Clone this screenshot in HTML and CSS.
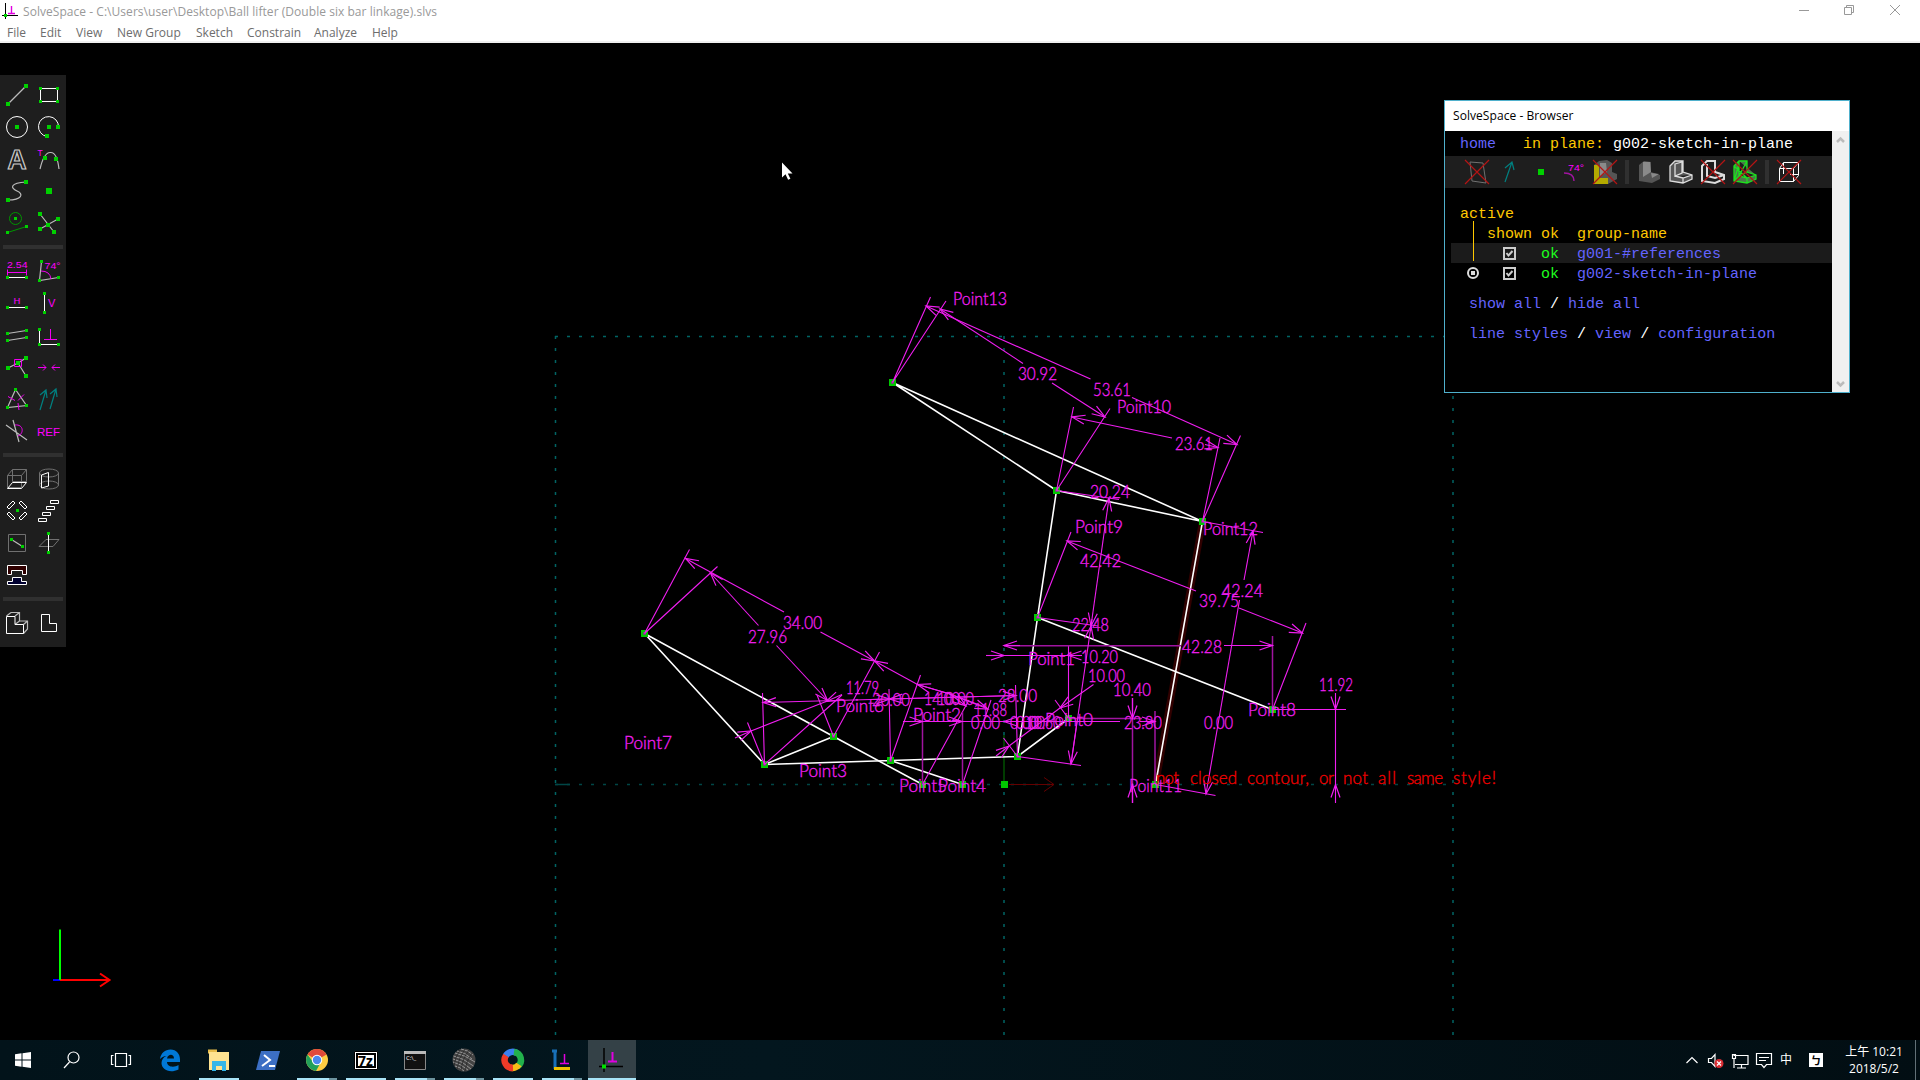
FILE: index.html
```html
<!DOCTYPE html>
<html lang="en">
<head>
<meta charset="utf-8">
<title>SolveSpace</title>
<link rel="stylesheet" href="styles.css">
</head>
<body>
<div class="desktop">
<header class="titlebar">
  <div class="caption">
    <svg class="app-icon" width="16" height="16" viewBox="0 0 16 16"><path d="M3.500 0v16M0 12.500h16" stroke="#000"/><path d="M6 10.500h7M9.500 3v7" stroke="#e000e0" stroke-width="1.400"/><path d="M2 11h3v3H2z" fill="#00d000"/></svg>
    <span class="caption-text">SolveSpace - C:\Users\user\Desktop\Ball lifter (Double six bar linkage).slvs</span>
    <svg class="win-controls" width="121" height="20" viewBox="0 0 121 20"><path d="M0 10.500h10M45.500 7.500h7v7h-7zM47.500 7.500v-2h7v7h-2M91 5l10 10M101 5l-10 10"/></svg>
  </div>
  <nav class="menu"><span class="m1">File</span><span class="m2">Edit</span><span class="m3">View</span><span class="m4">New Group</span><span class="m5">Sketch</span><span class="m6">Constrain</span><span class="m7">Analyze</span><span class="m8">Help</span></nav>
</header>

<main class="canvas">
<svg class="drawing" viewBox="0 43 1920 997" width="1920" height="997">
  <defs>
    <marker id="a" markerUnits="userSpaceOnUse" markerWidth="16" markerHeight="12" refX="14" refY="6" orient="auto-start-reverse"><path d="M1 1.500L14 6L1 10.500" fill="none" stroke="#f01ef0" stroke-width="1.200"/></marker>
    <marker id="r" markerUnits="userSpaceOnUse" markerWidth="14" markerHeight="16" refX="11" refY="8" orient="auto"><path d="M1 1L11 8L1 15" fill="none" stroke="#640000"/></marker>
  </defs>
  <g class="guides">
    <path d="M555.500 336V1040M1453 336V1040M1004 336V1040"/><path d="M555 336.500H1453"/><path class="faint" d="M555 784.500H1453"/><path class="solid" d="M555 784.500h15"/>
  </g>
  <path class="halo" d="M1202.500 521.500L1155.500 784.500"/>
  <path d="M1004 784V735" stroke="#003c00" stroke-width="2"/>
  <path d="M1009 784.500H1054" stroke="#640000" marker-end="url(#r)"/>
  <g class="lines">
    <path d="M833.500 736.500L764.500 764.500L644.500 633.500L833.500 736.500L922.500 784.500"/>
    <path d="M764.500 764.500L890.500 760.500L962.500 784.500M890.500 760.500L1017.500 756.500L1068.500 718.500"/>
    <path d="M1017.500 756.500L1037.500 617.500L1056.500 490.500M1037.500 617.500L1272.500 709.500"/>
    <path d="M1056.500 490.500L892.500 382.500L1202.500 521.500L1155.500 784.500M1056.500 490.500L1202.500 521.500"/>
  </g>
  <path class="points" d="M644.500 633.500h0M764.500 764.500h0M833.500 736.500h0M890.500 760.500h0M922.500 784.500h0M962.500 784.500h0M1004.500 784.500h0M1017.500 756.500h0M1037.500 617.500h0M1068.500 718.500h0M1155.500 784.500h0M1272.500 709.500h0M892.500 382.500h0M1056.500 490.500h0M1202.500 521.500h0"/>
  <path class="cores" d="M644.500 633.500h0M764.500 764.500h0M833.500 736.500h0M890.500 760.500h0M1017.500 756.500h0M1037.500 617.500h0M892.500 382.500h0M1056.500 490.500h0M1202.500 521.500h0"/>
  <g class="dims">
    <path d="M644.500 633.500L689.500 549.500M833.500 736.500L879.500 652M644.500 633.500L717.500 566.500M764.500 764.500L842 695M764.500 764.500L747.500 722.500M833.500 736.500L817 695M764.500 764.500L762.500 693M890.500 760.500L889 689M1017.500 756.500L1015.500 685M922.500 784.500L969 700M890.500 760.500L920.500 675M962.500 784.500L991 700"/>
    <path d="M892.500 382.500L930.500 297M892.500 382.500L946 301M1056.500 490.500L1110 408.500M1056.500 490.500L1073.500 407M1202.500 521.500L1240.500 435.500M1202.500 521.500L1220 438M1202.500 521.500L1263 532.500M1155.500 784.500L1215.500 795.500M1056.500 490.500L1119 499.500M1037.500 617.500L1098 626M1017.500 756.500L1081 765.500M1037.500 617.500L1071 532M1272.500 709.500L1306 623"/>
    <path d="M1068.500 645V718M1068.500 718.500L1055 700M1017.500 756.500L1003.500 738M1272.500 709.500H1346M1335.500 709V785"/>
    <path class="dim" d="M1272.500 636V709M1155 711V784M1068 718.500H1142M1132.500 698V803M1004 645.700H1181M922.500 712V784M962.500 712V784"/>
    <g marker-start="url(#a)">
      <path d="M685.500 558.500L784 612"/><path d="M710.500 573L758.500 625.500"/><path d="M874.500 661L917.500 684.500L950 694"/><path d="M917.500 684.500L950 694L985 707"/><path d="M763 702.500L889.500 699"/>
      <path d="M926 306L1090.500 379"/><path d="M940 309L1023 363.500"/><path d="M1072 417L1172 438"/><path d="M1253 531L1244 580"/><path d="M1109 498L1091 626"/><path d="M1091 626L1071 764"/><path d="M1067 541L1196 591"/><path d="M1004 645.500H1020"/><path d="M1068.500 655.500H1082"/><path d="M1060 708L1093.500 684.500"/><path d="M1004 721.500H1120"/><path d="M1132.500 784.500V803"/><path d="M1335.500 784.500V803"/><path d="M826 701.500L842 694.500"/><path d="M889.500 699L1016 695.500"/>
    </g>
    <g marker-end="url(#a)">
      <path d="M820.500 632L874.500 661"/><path d="M776.500 645.500L827.500 700.500"/><path d="M735 738L751 731"/><path d="M751 731L826 701.500" marker-end="none"/><path d="M870 699.500L889.500 699"/><path d="M889.500 699L1016 695.500"/>
      <path d="M950 694L966 706"/><path d="M955 696L988 709"/><path d="M1132 397.500L1237 444.500"/><path d="M1052 383L1105 417"/><path d="M1205 444.500L1218 447.500"/><path d="M1239.500 600L1206 794"/><path d="M1092 619L1091 626"/><path d="M1077 722L1071 764"/><path d="M1239 608L1302.500 633"/><path d="M1224 645.500H1272.500"/><path d="M986 655.500H1004"/><path d="M1004 655.500H1068" marker-end="none"/><path d="M996 756L1009 746"/><path d="M1009 746L1060 708" marker-end="none"/><path d="M903 721.500H922.500"/><path d="M922 721.500H962"/><path d="M962 721.500H1004" marker-end="none"/><path d="M1140 721.500H1155"/><path d="M1132.500 698V718.500"/><path d="M1335.500 693V709.500"/>
    </g>
  </g>
  <g class="labels">
    <text x="953" y="304.500" textLength="54" lengthAdjust="spacingAndGlyphs">Point13</text>
    <text x="1117" y="412.500" textLength="54" lengthAdjust="spacingAndGlyphs">Point10</text>
    <text x="1075" y="532.500" textLength="48" lengthAdjust="spacingAndGlyphs">Point9</text>
    <text x="1203" y="534.500" textLength="55" lengthAdjust="spacingAndGlyphs">Point12</text>
    <text x="1028" y="664.500" textLength="47" lengthAdjust="spacingAndGlyphs">Point1</text>
    <text x="1248" y="715.500" textLength="48" lengthAdjust="spacingAndGlyphs">Point8</text>
    <text x="1045" y="725.500" textLength="48" lengthAdjust="spacingAndGlyphs">Point0</text>
    <text x="1129" y="791.500" textLength="53" lengthAdjust="spacingAndGlyphs">Point11</text>
    <text x="899" y="791.500" textLength="48" lengthAdjust="spacingAndGlyphs">Point5</text>
    <text x="938" y="791.500" textLength="48" lengthAdjust="spacingAndGlyphs">Point4</text>
    <text x="913" y="720.500" textLength="48" lengthAdjust="spacingAndGlyphs">Point2</text>
    <text x="836" y="711.500" textLength="48" lengthAdjust="spacingAndGlyphs">Point6</text>
    <text x="799" y="776.500" textLength="48" lengthAdjust="spacingAndGlyphs">Point3</text>
    <text x="624" y="748.500" textLength="48" lengthAdjust="spacingAndGlyphs">Point7</text>
    <text x="1018" y="379.500" textLength="39" lengthAdjust="spacingAndGlyphs">30.92</text>
    <text x="1093" y="395.500" textLength="38" lengthAdjust="spacingAndGlyphs">53.61</text>
    <text x="1175" y="449.500" textLength="38" lengthAdjust="spacingAndGlyphs">23.61</text>
    <text x="1090" y="497.500" textLength="40" lengthAdjust="spacingAndGlyphs">20.24</text>
    <text x="1080" y="566.500" textLength="41" lengthAdjust="spacingAndGlyphs">42.42</text>
    <text x="1222" y="596.500" textLength="41" lengthAdjust="spacingAndGlyphs">42.24</text>
    <text x="1199" y="606.500" textLength="40" lengthAdjust="spacingAndGlyphs">39.75</text>
    <text x="1072" y="630.500" textLength="37" lengthAdjust="spacingAndGlyphs">22.48</text>
    <text x="1182" y="652.500" textLength="40" lengthAdjust="spacingAndGlyphs">42.28</text>
    <text x="1081" y="662.500" textLength="37" lengthAdjust="spacingAndGlyphs">10.20</text>
    <text x="1088" y="681.500" textLength="37" lengthAdjust="spacingAndGlyphs">10.00</text>
    <text x="1113" y="695.500" textLength="38" lengthAdjust="spacingAndGlyphs">10.40</text>
    <text x="1319" y="690.500" textLength="34" lengthAdjust="spacingAndGlyphs">11.92</text>
    <text x="1124" y="728.500" textLength="38" lengthAdjust="spacingAndGlyphs">23.80</text>
    <text x="1204" y="728.500" textLength="29" lengthAdjust="spacingAndGlyphs">0.00</text>
    <text x="971" y="728.500" textLength="29" lengthAdjust="spacingAndGlyphs">0.00</text>
    <text x="1010" y="728.500" textLength="29" lengthAdjust="spacingAndGlyphs">0.00</text>
    <text x="1016" y="728.500" textLength="29" lengthAdjust="spacingAndGlyphs">0.00</text>
    <text x="1026" y="728.500" textLength="35" lengthAdjust="spacingAndGlyphs">10.60</text>
    <text x="998" y="701.500" textLength="39" lengthAdjust="spacingAndGlyphs">28.00</text>
    <text x="974" y="715.500" textLength="33" lengthAdjust="spacingAndGlyphs">11.88</text>
    <text x="924" y="704.500" textLength="36" lengthAdjust="spacingAndGlyphs">14.00</text>
    <text x="937" y="704.500" textLength="37" lengthAdjust="spacingAndGlyphs">10.00</text>
    <text x="872" y="705.500" textLength="38" lengthAdjust="spacingAndGlyphs">20.00</text>
    <text x="846" y="693.500" textLength="33" lengthAdjust="spacingAndGlyphs">11.79</text>
    <text x="783" y="628.500" textLength="39" lengthAdjust="spacingAndGlyphs">34.00</text>
    <text x="748" y="643" textLength="39" lengthAdjust="spacingAndGlyphs">27.96</text>
    <g class="error"><text x="1156" y="783.500" textLength="23">not</text><text x="1190" y="783.500" textLength="47">closed</text><text x="1247" y="783.500" textLength="62">contour,</text><text x="1319" y="783.500" textLength="15">or</text><text x="1343" y="783.500" textLength="25">not</text><text x="1378" y="783.500" textLength="18">all</text><text x="1407" y="783.500" textLength="36">same</text><text x="1453" y="783.500" textLength="43">style!</text></g>
  </g>
  <g fill="none" stroke-width="2"><path d="M53 980H60" stroke="#00f"/><path d="M60 980H109M100 973.500L109.500 980L100 986.500" stroke="#f00"/><path d="M60 929.500V980" stroke="#0f0"/></g>
  <path d="M782 162.500v15l3.500-3.200 2.600 5.400 2.300-1-2.600-5.300h4.700z" fill="#fff"/>
</svg>

<aside class="toolbar">
  <div class="tools">
    <svg viewBox="0 0 32 32"><path class="g" d="M7 25L25 7"/><path class="d" d="M7 25h0M25 7h0"/></svg>
    <svg viewBox="0 0 32 32"><path class="w" d="M7.500 9.500h17v13h-17z"/><path class="d s" d="M7.500 9.500h0M24.500 9.500h0M7.500 22.500h0M24.500 22.500h0"/></svg>
    <svg viewBox="0 0 32 32"><circle class="w" cx="16" cy="16" r="10.500"/><path class="d" d="M16 16h0"/></svg>
    <svg viewBox="0 0 32 32"><path class="w" d="M25.500 16A10 10 0 1 0 14 25.500"/><path class="d" d="M16 16h0M25 16h0M14 25h0"/></svg>
    <svg viewBox="0 0 32 32"><text class="big" x="6.500" y="26" textLength="19" lengthAdjust="spacingAndGlyphs">A</text></svg>
    <svg viewBox="0 0 32 32"><path class="g" d="M7 26Q11 9 17.500 9.500Q24 9 26 26"/><path class="d" d="M12 15h0M23 16h0"/><text class="t" x="4.500" y="13" font-size="8.500">T</text></svg>
    <svg viewBox="0 0 32 32"><path class="g" d="M25 7C9 8 9 13 16 16S21 25 7 25"/><path class="d" d="M7 25h0M25 7h0"/></svg>
    <svg viewBox="0 0 32 32"><path fill="#00d000" d="M13 13h6v6h-6z"/></svg>
    <svg viewBox="0 0 32 32"><path class="gr" d="M6.500 25.500l19-6M8.500 11.500a6 6 0 1 0 12 0a6 6 0 1 0-12 0"/><path class="d s" d="M6.500 25.500h0M25.500 19.500h0M14.500 11.500h0"/></svg>
    <svg viewBox="0 0 32 32"><path class="g" d="M7 7l14 18M7 22l18-10"/><path class="d" d="M7 7h0M25 12h0M15 18h0M7 22h0M21 25h0"/></svg>
  </div>
  <hr>
  <div class="tools">
    <svg viewBox="0 0 32 32"><text class="t" x="6" y="12.500" font-size="9.500" textLength="20.500" lengthAdjust="spacingAndGlyphs">2.54</text><path class="m" d="M6.500 14.500v6M25.500 14.500v6M6.500 17.500h19"/><path class="w" d="M6 22.500h20"/><path class="d s" d="M6.500 22.500h0M25.500 22.500h0"/></svg>
    <svg viewBox="0 0 32 32"><path class="g" d="M8.500 6.500l-2 19 19-3"/><path class="m" d="M8 16q9 0 10 8"/><text class="t" x="11.500" y="14" font-size="9.500" textLength="16" lengthAdjust="spacingAndGlyphs">74°</text><path class="d s" d="M8.500 6.500h0M6.500 25.500h0M25.500 22.500h0"/></svg>
    <svg viewBox="0 0 32 32"><text class="t" x="12.500" y="17" font-size="9.500">H</text><path class="w" d="M6 20.500h20"/><path class="d s" d="M6.500 20.500h0M25.500 20.500h0"/></svg>
    <svg viewBox="0 0 32 32"><text class="t" x="15" y="20" font-size="11">V</text><path class="w" d="M11.500 6v20"/><path class="d s" d="M11.500 6.500h0M11.500 25.500h0"/></svg>
    <svg viewBox="0 0 32 32"><path class="g" d="M6.500 14.500l19-3M6.500 21.500l19-3"/><path class="d s" d="M6.500 14.500h0M25.500 11.500h0M6.500 21.500h0M25.500 18.500h0"/></svg>
    <svg viewBox="0 0 32 32"><path class="w" d="M6.500 10.500v15h19"/><path class="m" d="M11 20.500h13M17.500 10v10"/><path class="d s" d="M6.500 10.500h0M6.500 25.500h0M25.500 25.500h0"/></svg>
    <svg viewBox="0 0 32 32"><path class="g" d="M7 17L17 12L25 7M17 12L25 25"/><path class="m" d="M13.500 8.500h7v7h-7z"/><path class="d" d="M7 17h0M17 12h0M25 7h0M25 25h0"/></svg>
    <svg viewBox="0 0 32 32"><path class="m" d="M5 16.500h8M10 13.500l3 3-3 3M27 16.500h-8M22 13.500l-3 3 3 3"/></svg>
    <svg viewBox="0 0 32 32"><path class="g" d="M14.500 6.500l-8 18 19-2z"/><path class="m" d="M7 13.500l7 4M23 11.500l-6 6M17 20l1 7"/><path class="d s" d="M14.500 6.500h0M6.500 24.500h0M25.500 22.500h0"/></svg>
    <svg viewBox="0 0 32 32"><path class="te" d="M7 27l6-20M7 12l6-5 1 8M17 26l6-20M17 11l6-5 1 8"/></svg>
    <svg viewBox="0 0 32 32"><path class="g" d="M5 10l21 15M12 5l6 22"/><path class="m" d="M14 10c9-1 9 9 3 11"/></svg>
    <svg viewBox="0 0 32 32"><text class="t" x="4" y="21" font-size="11.500" textLength="23" lengthAdjust="spacingAndGlyphs">REF</text></svg>
  </div>
  <hr>
  <div class="tools">
    <svg viewBox="0 0 32 32"><path class="dk" d="M6.500 12.500h14v12h-14zM11.500 6.500h14v12h-14zM6.500 12.500l5-6M20.500 12.500l5-6"/><path class="w" d="M6.500 25.500h14l5-6h-14z"/></svg>
    <svg viewBox="0 0 32 32"><path class="dk" d="M6.500 10v12.500M25.500 10v12.500M6.500 10a9.500 4 0 1 1 19 0a9.500 4 0 1 1-19 0M6.500 22a9.500 4 0 1 1 19 0a9.500 4 0 1 1-19 0"/><path class="w" d="M8.500 12l7-2.500v13.500l-7 2z"/></svg>
    <svg viewBox="0 0 32 32"><path class="w" d="M6 12l6-6 2 2-6 6zM26 12l-6-6-2 2 6 6zM6 19l6 6 2-2-6-6zM26 19l-6 6-2-2 6-6z"/><path class="d s" d="M16.500 15.500h0"/></svg>
    <svg viewBox="0 0 32 32"><path class="w" d="M17.500 5.500h8v3h-8zM13.500 11.500h8v3h-8zM9.500 17.500h8v3h-8zM5.500 23.500h8v3h-8z"/></svg>
    <svg viewBox="0 0 32 32"><path class="dk" d="M7.500 7.500h17v17h-17z"/><path class="g" d="M10.500 12.500l11 7"/><path class="d s" d="M10.500 12.500h0M21.500 19.500h0"/></svg>
    <svg viewBox="0 0 32 32"><path class="dk" d="M6 19.500l7-7h13l-6 7z"/><path class="w" d="M15.500 7v18"/><path class="d s" d="M15.500 6.500h0M15.500 25.500h0"/></svg>
    <svg viewBox="0 0 32 32"><path class="w" fill="#300000" d="M6.500 6.500h19v9h-4v-4h-11v4h-4z"/><path class="w" fill="#000030" d="M6.500 25.500v-3h5v-4h9v4h5v3z"/></svg>
  </div>
  <hr>
  <div class="tools">
    <svg viewBox="0 0 32 32"><path class="g" d="M10 5.500h8.500v8.500h8v8l-4 4.500M5.500 9l4.500-3.500M14 9l4.500-3.500M14 17.500l4.500-3.500M22.500 17.500l4-3.500"/><path class="w" d="M5.500 9.500h8.500v8h8.500v9h-17z"/></svg>
    <svg viewBox="0 0 32 32"><path class="w" d="M8.500 7.500h8v9h7v8h-15z"/></svg>
  </div>
</aside>

<section class="browser">
  <div class="browser-title">SolveSpace - Browser</div>
  <div class="browser-body">
    <div class="pane">
      <div class="row head"><a>home</a>   <i>in plane:</i> <b>g002-sketch-in-plane</b></div>
      <div class="iconbar">
        <svg viewBox="0 0 32 32"><path class="dk" d="M9 6l13 1 3 20-14-2z"/><path class="x" d="M4 4l24 24M28 4L4 28"/></svg>
        <svg viewBox="0 0 32 32"><path class="te" d="M12 26l7-20M12 12l7-6 2 8"/></svg>
        <svg viewBox="0 0 32 32"><path fill="#00d000" d="M13 13h6v6h-6z"/></svg>
        <svg viewBox="0 0 32 32"><path class="m dim" d="M7 17q10 0 10 8"/><text class="t" x="11" y="15" font-size="9.500" textLength="16" lengthAdjust="spacingAndGlyphs">74°</text></svg>
        <svg viewBox="0 0 32 32"><path fill="#555" d="M5 9l5-4 8-1 5 3v9l5 2v5l-9 5H5z"/><path fill="#8a8a8a" d="M11 7h6l1 9-7 4z"/><path fill="#b4aa00" d="M5 9h5v13h9v6H5z"/><path class="x" d="M4 4l24 24M28 4L4 28"/></svg>
        <span class="sep"></span>
        <svg viewBox="0 0 32 32"><path fill="#555" d="M6 9l5-4 7 1v10l9 3v4l-8 4-13-2z"/><path fill="#8a8a8a" d="M10 6h7l1 10-8 5zM18 17l8 1-7 4z"/></svg>
        <svg viewBox="0 0 32 32"><path class="l" fill="#555" d="M5 10l5-5h8v11l9 3v4l-9 4-13-2zM10 8l7-2v11l-7 3zM10 20l8 2 9-3M18 22v5"/></svg>
        <svg viewBox="0 0 32 32"><path class="l thick" d="M5 10l5-5h8v11l9 3v4l-9 4-13-2zM10 8v12l8 2 9-3"/><path class="x" d="M4 4l24 24M28 4L4 28"/></svg>
        <svg viewBox="0 0 32 32"><path fill="#4a7a4a" stroke="#1ee01e" stroke-width="1.300" d="M5 10l5-5h8v11l9 3v4l-9 4-13-2zM10 5v15l8 2 9-3M10 20L18 5M5 25l5-17M10 20l8-4M18 27v-5M5 10l13 12M10 20l-5 5"/><path class="x" d="M4 4l24 24M28 4L4 28"/></svg>
        <span class="sep"></span>
        <svg viewBox="0 0 32 32"><path class="w" d="M6.500 12.500h14v13h-14zM6.500 12.500l4-6h15v13l-5 6M20.500 12.500l5-6M10.500 7v11M17 18.500h8"/><path class="x" d="M4 4l24 24M28 4L4 28"/></svg>
      </div>
      <div class="list">
        <div class="row"><i>active</i></div>
        <div class="row"><i>   shown ok  group-name</i></div>
        <div class="row shade">         <em>ok</em>  <a>g001-#references</a><svg class="check" viewBox="0 0 13 13"><path d="M1 1h11v11H1z"/><path d="M3.500 6l2 2.500L9.500 4"/></svg></div>
        <div class="row">         <em>ok</em>  <a>g002-sketch-in-plane</a><svg class="check" viewBox="0 0 13 13"><path d="M1 1h11v11H1z"/><path d="M3.500 6l2 2.500L9.500 4"/></svg><svg class="radio" viewBox="0 0 12 12"><circle cx="6" cy="6" r="5"/><path d="M5 5h2v2H5z"/></svg></div>
        <span class="stem"></span>
      </div>
      <div class="row links"> <a>show all</a> <b>/</b> <a>hide all</a></div>
      <div class="row links"> <a>line styles</a> <b>/</b> <a>view</a> <b>/</b> <a>configuration</a></div>
    </div>
    <div class="scroll"><svg viewBox="0 0 17 17"><path d="M5 11l3.500-3.500L12 11"/></svg><svg viewBox="0 0 17 17"><path d="M5 7l3.500 3.500L12 7"/></svg></div>
  </div>
</section>
</main>

<footer class="taskbar">
  <div class="apps">
    <span><svg viewBox="0 0 32 32"><path fill="#fff" d="M8 10.300l6.500-1V15.500H8zM15.500 9.200L24 8v7.500h-8.500zM8 16.500h6.500v6.300L8 21.800zM15.500 16.500H24V24l-8.500-1.200z"/></svg></span>
    <span><svg viewBox="0 0 32 32"><path class="tl" d="M13.500 18L8 24"/><circle class="tl" cx="17.500" cy="13.500" r="5.500"/></svg></span>
    <span><svg viewBox="0 0 32 32"><path class="tl" d="M10.500 9.500h11v13h-11zM8.500 11.500h-2v9h2M23.500 11.500h2v9h-2"/></svg></span>
    <span><svg viewBox="0 0 32 32"><path fill="#0078d7" d="M6 15C7 9 11 5.500 16.500 5.500 22.500 5.500 26 10 26 15.500V18H13c0 5 7 6 11.500 3v4.500C15 30 7.500 25 7.500 19c0-3 2-6 5-7-3 0-5 1.500-6.500 3zM13 14.500h7c0-5-6-5-7 0z"/></svg></span>
    <span class="run"><svg viewBox="0 0 32 32"><path fill="#e8bc4a" d="M5 5.500h9v4H5z"/><path fill="#ffe391" d="M6 8h20v18H6z"/><path fill="#35b6e8" d="M9 17h14v10h-4v-5h-6v5H9z"/></svg></span>
    <span><svg viewBox="0 0 32 32"><path fill="#3c6fc4" d="M9 7h19l-5 19H4z"/><path d="M12 11l6 5-8 6M17 22h6" stroke="#fff" stroke-width="2"/></svg></span>
    <span class="run multi"><svg viewBox="0 0 32 32"><circle cx="16" cy="16" r="11" fill="#ffcd42"/><path fill="#e04a3a" d="M16 16L6.500 10.500a11 11 0 0 1 19 0z"/><path fill="#22a05a" d="M6.500 10.500a11 11 0 0 0 8.500 16.400L20 18l-8 0z"/><circle cx="16" cy="16" r="5.200" fill="#fff"/><circle cx="16" cy="16" r="4.200" fill="#4a88ee"/></svg></span>
    <span class="run"><svg viewBox="0 0 32 32"><path fill="#fff" stroke="#000" d="M4.500 7.500h23v18h-23z"/><path d="M7 10h18v13H7z" fill="#fff" stroke="#000" stroke-width="2"/><text class="zip" x="8" y="22" font-size="14">7z</text></svg></span>
    <span class="run multi"><svg viewBox="0 0 32 32"><path fill="#111" stroke="#888" d="M5.500 7.500h21v18h-21z"/><path fill="#bbb" d="M5 7h22v3H5z"/><text x="7" y="16" font-size="6" fill="#fff">C:\_</text></svg></span>
    <span class="run multi"><svg viewBox="0 0 32 32"><circle cx="16" cy="16" r="11.500" fill="#444"/><g stroke="#aaa" stroke-width=".8"><path d="M9 7q8 1 15 8M7 9q10 2 20 9M5.500 12q10 2 20 10M5 15q10 2 18 10M5 18q8 2 15 8M7 22q5 1 9 5M13 5q7 1 12 6"/></g><g stroke="#222" stroke-width=".7"><path d="M9 25q1-10 8-20M13 27q1-12 8-21M17 27q1-10 7-18M6 22q1-9 6-16"/></g></svg></span>
    <span class="run"><svg viewBox="0 0 32 32"><g stroke-width="6.500"><path stroke="#3a80f0" d="M8.700 12A8 8 0 0 1 20 9"/><path stroke="#22b14c" d="M17 8A8 8 0 0 1 20.500 22.500"/><path stroke="#f8bd18" d="M22 20.500A8 8 0 0 1 13 23.500"/><path stroke="#ef3b28" d="M16 24A8 8 0 0 1 9 11.500"/></g></svg></span>
    <span class="run multi"><svg viewBox="0 0 32 32"><path d="M9 6v19M6 7h5" stroke="#1870b8" stroke-width="3"/><path d="M8 24.500h16" stroke="#f0c000" stroke-width="3"/><path d="M14 19.500h9M18.500 10v9" stroke="#e000e0" stroke-width="1.500"/></svg></span>
    <span class="run active"><svg viewBox="0 0 32 32"><path d="M9 4v24M4 22.500h24" stroke="#000" stroke-width="1.500"/><path d="M13 17.500h9M17.500 8v9" stroke="#e000e0" stroke-width="2"/><path fill="#00e000" d="M7 20.500h4v4H7z"/></svg></span>
  </div>
  <div class="tray">
    <svg width="112" height="20" viewBox="0 0 112 20"><g class="tl"><path d="M.5 13L6 7.500l5.500 5.500M22.500 8.500h3l3.500-4v12l-3.500-4h-3zM47.500 5.500H62v9H49M55.500 15v3M51 18h9M46.500 4.500h3v4h-3zM48 8.500V18M70.500 3.500h15v11h-5l-2.500 3-2.500-3h-5zM73 7.500h10M73 10.500h7"/></g><circle cx="33" cy="13.500" r="4.500" fill="#d82c32"/><path class="tl" d="M31 11.500l4 4M35 11.500l-4 4"/></svg>
    <span class="ime">中</span><span class="bopo">ㄅ</span>
    <div class="clock"><span>上午 10:21</span><span>2018/5/2</span></div>
  </div>
</footer>
</div>
</body>
</html>
```
FILE: styles.css
```css
* { box-sizing: border-box; }
body { margin: 0; background: #000; font-family: "Open Sans", "Noto Sans", "Noto Sans CJK TC", sans-serif; font-size: 12px; overflow: hidden; }
.desktop { width: 1920px; height: 1080px; display: flex; flex-direction: column; }
svg { display: block; fill: none; flex: none; }

.titlebar { height: 43px; background: #fff; border-bottom: 2px solid #f0f0f0; }
.caption { display: flex; height: 23px; padding-left: 2px; color: #999; }
.app-icon { margin-top: 3px; }
.caption-text { margin-left: 5px; line-height: 24px; letter-spacing: .045px; white-space: nowrap; }
.win-controls { margin-left: auto; stroke: #999; }
.menu { display: flex; padding-left: 7px; line-height: 19px; color: #6d6d6d; white-space: nowrap; }
.m1 { width: 33px; }
.m2 { width: 36px; }
.m3 { width: 41px; }
.m4 { width: 79px; }
.m5 { width: 51px; }
.m6 { width: 67px; }
.m7 { width: 58px; }

.canvas { position: relative; height: 997px; background: #000; overflow: hidden; }
.guides { stroke: #006464; stroke-width: 1.5; stroke-dasharray: 3 9; }
.faint { stroke: #004646; }
.solid { stroke-dasharray: none; stroke: #004646; }
.halo { stroke: #300000; stroke-width: 7; }
.lines { stroke: #fff; stroke-width: 1.6; }
.points { stroke: #00c800; stroke-width: 7; stroke-linecap: square; }
.cores { stroke: #a01ea0; stroke-width: 2.5; stroke-linecap: square; }
.dims { stroke: #f01ef0; stroke-width: 1.1; }
.dim { stroke: #a014a0; stroke-width: 1.5; }
.labels { fill: #f01ef0; stroke: #f01ef0; stroke-width: .35; font-family: Lato, sans-serif; font-weight: 300; font-size: 17px; }
.error { fill: #f00000; stroke: #f00000; }

.toolbar { position: absolute; left: 0; top: 32px; width: 66px; height: 572px; padding: 4px 1px; background: #1e1e1e; }
.tools { display: grid; grid-template-columns: 32px 32px; grid-auto-rows: 32px; }
.toolbar hr { height: 4px; margin: 6px 2px; border: 0; background: #303030; }
.w { stroke: #fff; }
.g { stroke: #bbb; stroke-width: 1.2; }
.dk { stroke: #707070; }
.gr { stroke: #009600; }
.m { stroke: #f000f0; }
.m.dim { stroke: #a014a0; }
.te { stroke: #008080; stroke-width: 1.2; }
.d { stroke: #00d000; stroke-width: 4; stroke-linecap: square; }
.d.s { stroke-width: 3; }
.t { fill: #f0f; font-family: "Liberation Sans", sans-serif; }
.big { stroke: #ccc; stroke-width: 1.2; font: 700 27px "Liberation Sans", sans-serif; }

.browser { position: absolute; left: 1444px; top: 57px; width: 406px; height: 293px; border: 1px solid #4fb0cc; background: #000; }
.browser-title { height: 30px; padding-left: 8px; line-height: 29px; background: #fff; color: #000; letter-spacing: .06px; }
.browser-body { display: flex; height: 261px; }
.pane { flex: 1; font: 15px/24px "Liberation Mono", monospace; }
.row { position: relative; height: 20px; margin-left: 6px; padding-left: 9px; white-space: pre; }
.row a { color: #6464ff; }
.row i { color: #ffc800; font-style: normal; }
.row b { color: #fff; font-weight: 400; }
.row em { color: #1eff1e; font-style: normal; }
.head { height: 25px; line-height: 28px; }
.iconbar { display: flex; align-items: center; height: 32px; padding-left: 16px; background: #1e1e1e; }
.iconbar svg, .tools svg { width: 32px; height: 32px; }
.sep { width: 4px; height: 24px; margin: 0 4px; background: #303030; }
.x { stroke: #b41414; stroke-width: 1.2; }
.l { stroke: #ddd; stroke-width: 1.3; }
.thick { stroke-width: 2; }
.list { position: relative; padding-top: 15px; }
.shade { background: #1b1b1b; }
.check { position: absolute; left: 52px; top: 4px; width: 13px; height: 13px; stroke: #ccc; stroke-width: 2; }
.shade .check { top: 4px; }
.radio { position: absolute; left: 16px; top: 4px; width: 12px; height: 12px; stroke: #ddd; stroke-width: 2; }
.stem { position: absolute; left: 28px; top: 33px; width: 1px; height: 40px; background: #ffc800; }
.links { margin-top: 10px; }
.scroll { width: 17px; display: flex; flex-direction: column; justify-content: space-between; background: #f0f0f0; }
.scroll svg { stroke: #bbb; stroke-width: 2.5; }

.taskbar { height: 40px; display: flex; justify-content: space-between; background: linear-gradient(90deg, #02131a, #03161e 40%, #020e13); }
.apps { display: flex; gap: 1px; }
.apps span { width: 48px; height: 40px; padding: 4px 8px 4px 7px; }
.apps svg { width: 32px; height: 32px; }
.apps .run { background: linear-gradient(#a9e4f7, #a9e4f7) 3px 100% / 40px 2px no-repeat; }
.apps .multi { background: linear-gradient(90deg, #a9e4f7 32px, #6d949f 32px) 3px 100% / 40px 2px no-repeat; }
.apps .active { background: linear-gradient(#a9e4f7, #a9e4f7) 0 100% / 48px 2px no-repeat, #344147; }
.zip { fill: #000; font-weight: 700; }
.tl { stroke: #fff; stroke-width: 1.2; }
.tray { display: flex; align-items: center; width: 234px; margin-right: 4px; padding-left: 4px; border-right: 1px solid #627076; color: #fff; }
.ime { width: 14px; margin-left: -18px; line-height: 20px; }
.bopo { width: 14px; height: 14px; margin-left: 15px; background: #fff; color: #000; font: 700 11px/14px "Noto Sans CJK TC", sans-serif; text-align: center; }
.clock { width: 60px; margin-left: 21px; display: flex; flex-direction: column; text-align: center; line-height: 17px; white-space: nowrap; }
```
